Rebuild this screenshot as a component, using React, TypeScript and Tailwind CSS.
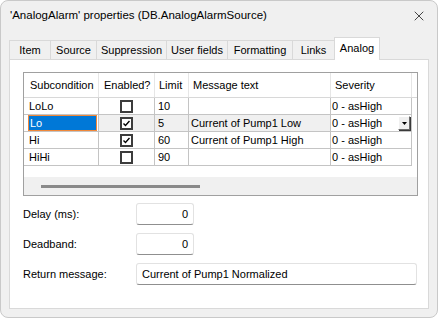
import { X } from 'lucide-react'

const TABS = [
  { label: 'Item', w: 'w-[41px]' },
  { label: 'Source', w: 'w-[46px]' },
  { label: 'Suppression', w: 'w-[70px]' },
  { label: 'User fields', w: 'w-[61px]' },
  { label: 'Formatting', w: 'w-[65px]' },
  { label: 'Links', w: 'w-[42px]' },
]

const ROWS = [
  { name: 'LoLo', enabled: false, limit: '10', msg: '', sev: '0 - asHigh' },
  { name: 'Lo', enabled: true, limit: '5', msg: 'Current of Pump1 Low', sev: '0 - asHigh', active: true },
  { name: 'Hi', enabled: true, limit: '60', msg: 'Current of Pump1 High', sev: '0 - asHigh' },
  { name: 'HiHi', enabled: false, limit: '90', msg: '', sev: '0 - asHigh' },
]

function CheckBox({ checked }: { checked: boolean }) {
  return (
    <div className="flex h-[13px] w-[13px] items-center justify-center border-2 border-[#3c3c3c] bg-white">
      {checked && (
        <svg width="7" height="7" viewBox="0 0 7 7">
          <path d="M0.5 3.5 L2.5 5.5 L6.5 1" fill="none" stroke="#000" strokeWidth="1.4" />
        </svg>
      )}
    </div>
  )
}

function DropButton() {
  return (
    <div className="flex h-[14px] w-[12px] items-center justify-center border border-t-white border-l-white border-r-[#6a6a6a] border-b-[#6a6a6a] bg-[#f0f0f0] shadow-[1px_1px_0_#3a3a3a]">
      <svg width="5" height="3" viewBox="0 0 5 3">
        <path d="M0 0 H5 L2.5 3 Z" fill="#000" />
      </svg>
    </div>
  )
}

function AlarmGrid() {
  return (
    <div className="flex h-[124px] w-[395px] flex-col border border-[#a0a0a0] bg-white font-['Liberation_Sans',Arial,sans-serif] text-[11px] text-black">
      <div className="flex h-[25px] shrink-0 border-b border-[#d8d8d8]">
        <div className="flex w-[75px] items-center border-r border-[#e6e6e6] pl-[6px]">Subcondition</div>
        <div className="flex w-[56px] items-center border-r border-[#e6e6e6] pl-[5px]">Enabled?</div>
        <div className="flex w-[34px] items-center border-r border-[#e6e6e6] pl-[4px]">Limit</div>
        <div className="flex w-[142px] items-center border-r border-[#e6e6e6] pl-[4px]">Message text</div>
        <div className="flex w-[81px] items-center border-r border-[#e6e6e6] pl-[4px]">Severity</div>
        <div className="flex-1" />
      </div>
      {ROWS.map((r) => (
        <div key={r.name} className="flex h-[17px] w-[388px] shrink-0 border-b border-[#c4c4c4]">
          <div
            className={
              r.active
                ? 'flex w-[75px] items-center border-r border-[#c4c4c4] bg-white pr-[1px]'
                : 'flex w-[75px] items-center border-r border-[#c4c4c4] pl-[5px]'
            }
          >
            {r.active ? (
              <div className="ml-[4px] flex h-[16px] flex-1 items-center border border-[#f0883a] bg-[#0078d7] pl-[1px] text-white">
                {r.name}
              </div>
            ) : (
              r.name
            )}
          </div>
          <div
            className={`flex w-[56px] items-center justify-center border-r border-[#c4c4c4] ${r.active ? 'bg-[#f0f0f0]' : ''}`}
          >
            <CheckBox checked={r.enabled} />
          </div>
          <div
            className={`flex w-[34px] items-center border-r border-[#c4c4c4] pl-[3px] ${r.active ? 'bg-[#f0f0f0]' : ''}`}
          >
            {r.limit}
          </div>
          <div
            className={`flex w-[142px] items-center border-r border-[#c4c4c4] pl-[2px] ${r.active ? 'bg-[#f0f0f0]' : ''}`}
          >
            {r.msg}
          </div>
          <div className="flex w-[81px] items-center justify-between border-r border-[#c4c4c4] pl-[1px] pr-[1px]">
            <span>{r.sev}</span>
            {r.active && <DropButton />}
          </div>
        </div>
      ))}
      <div className="flex-1" />
      <div className="flex h-[18px] shrink-0 items-center bg-[#f0f0f0] pl-[17px]">
        <div className="h-[3px] w-[159px] bg-[#8a8a8a]" />
      </div>
    </div>
  )
}

function Field({ value, wide, right }: { value: string; wide?: boolean; right?: boolean }) {
  return (
    <div
      className={`flex h-[22px] items-center rounded-[3px] border border-[#e2e2e2] border-b-[#8f8f8f] bg-white px-[5px] ${
        wide ? 'w-[281px]' : 'w-[58px] justify-end'
      } ${right ? 'justify-end' : ''}`}
    >
      {value}
    </div>
  )
}

export default function App() {
  return (
    <div className="h-[318px] w-[438px] overflow-hidden rounded-[8px] border border-[#c9c9c9] bg-[#f0f0f0] font-['Liberation_Sans',Arial,sans-serif] text-[11px] text-black">
      <div className="flex h-[29px] items-center justify-between pl-[9px] pr-[10px] text-[11.5px]">
        <span>'AnalogAlarm' properties (DB.AnalogAlarmSource)</span>
        <X size={16} strokeWidth={1.2} className="text-[#1a1a1a]" />
      </div>
      <div className="flex h-[29px] items-end pl-[8px]">
        {TABS.map((t, i) => (
          <div
            key={t.label}
            className={`flex h-[19px] ${t.w} items-center justify-center border-l border-t border-[#d9d9d9] ${
              i === TABS.length - 1 ? '' : ''
            }`}
          >
            {t.label}
          </div>
        ))}
        <div className="relative z-10 -mb-px flex h-[23px] w-[46px] items-start justify-center border border-b-0 border-[#d9d9d9] bg-white pt-[2px]">
          Analog
        </div>
      </div>
      <div className="mx-[8px] flex h-[250px] flex-col border border-[#d9d9d9] bg-white px-[13px] pt-[12px]">
        <AlarmGrid />
        <div className="mt-[7px] grid grid-cols-[113px_1fr] items-center gap-y-[8px]">
          <span>Delay (ms):</span>
          <Field value="0" />
          <span>Deadband:</span>
          <Field value="0" />
          <span>Return message:</span>
          <Field value="Current of Pump1 Normalized" wide />
        </div>
      </div>
    </div>
  )
}
